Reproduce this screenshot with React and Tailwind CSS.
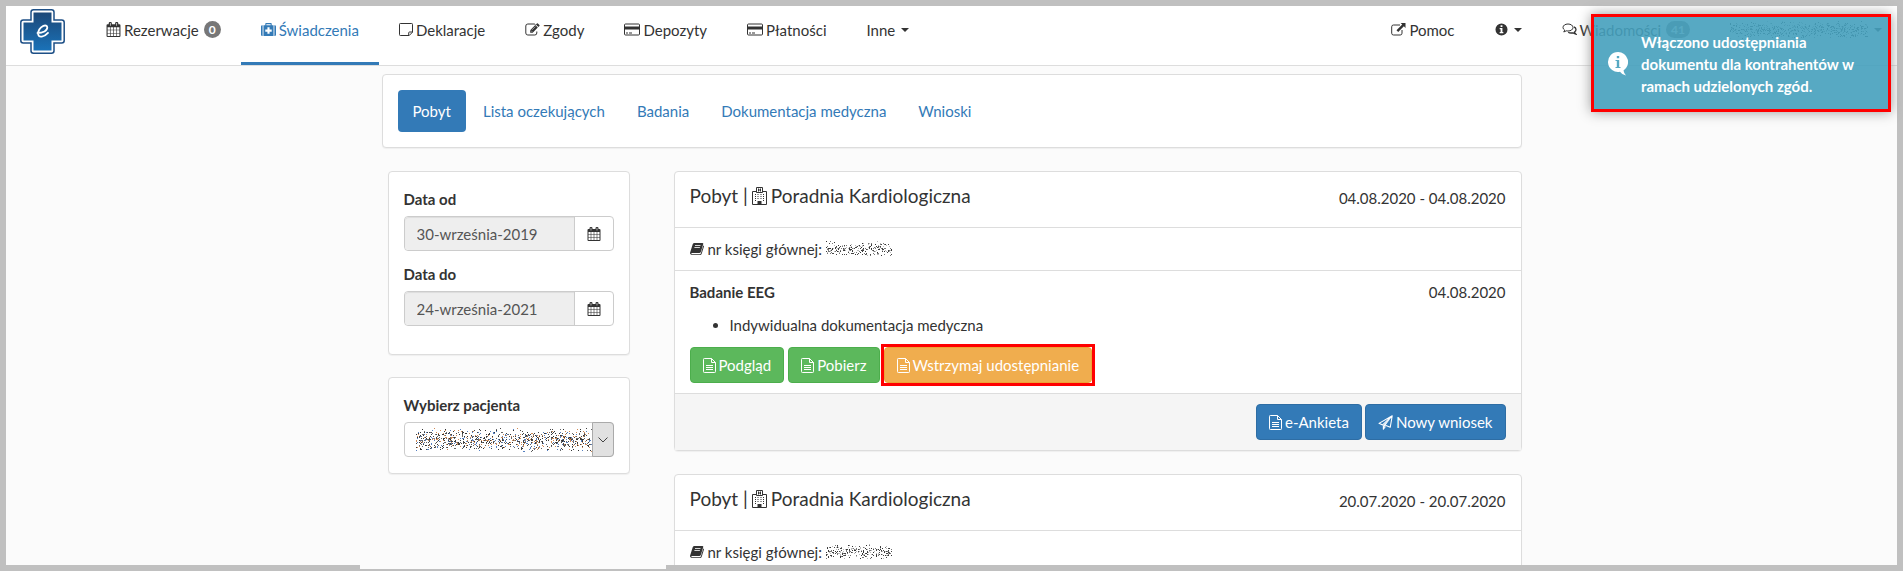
import { clsx } from 'clsx';

const CalendarIcon = ({ className }) => (
  <svg viewBox="0 0 14 14" className={className} fill="currentColor" aria-hidden="true">
    <path
      fillRule="evenodd"
      d="M1.5 2h1v-.7Q2.500 0 3.700 0h.6Q5.500 0 5.500 1.300V2h3v-.7Q8.500 0 9.700 0h.6q1.200 0 1.200 1.300V2h1q1 0 1 1v10q0 1-1 1h-11q-1 0-1-1V3q0-1 1-1zM1.500 5v2.200h2.200V5zM4.300 5v2.200h2.400V5zM7.300 5v2.200h2.400V5zM10.300 5v2.200h2.200V5zM1.500 7.800v2.400h2.200V7.800zM4.300 7.800v2.400h2.400V7.800zM7.300 7.800v2.400h2.400V7.800zM10.300 7.800v2.400h2.200V7.800zM1.500 10.800V13h2.200v-2.200zM4.300 10.800V13h2.400v-2.200zM7.300 10.800V13h2.400v-2.200zM10.300 10.800V13h2.200v-2.200zM3.700 1v2.500h.6V1zM9.700 1v2.500h.6V1z"
    />
  </svg>
);

const MedkitIcon = ({ className }) => (
  <svg viewBox="0 0 14 14" className={className} fill="currentColor" aria-hidden="true">
    <path
      fillRule="evenodd"
      d="M0 4.200Q0 3 1.200 3H1.500v10h-.3Q0 13 0 11.800zM2.300 3H4V1.700Q4 1 4.700 1h4.600q.7 0 .7.7V3h1.700v10H2.300zM5 2v1h4V2zM12.500 3h.3Q14 3 14 4.200v7.600q0 1.200-1.200 1.200h-.3zM6 5v2H4v2h2v2h2V9h2V7H8V5z"
    />
  </svg>
);

const NoteIcon = ({ className }) => (
  <svg viewBox="0 0 14 14" className={className} fill="none" stroke="currentColor" aria-hidden="true">
    <path d="M1.300 1h11.400q.8 0 .8.8v7.900l-3.300 3.300H1.300q-.8 0-.8-.8V1.800q0-.8.8-.8zM9.700 13v-2.700q0-.8.8-.8h3" />
  </svg>
);

const EditIcon = ({ className }) => (
  <svg viewBox="0 0 15 14" className={className} aria-hidden="true">
    <path
      d="M10.500 2.200Q10 1.500 9 1.500H2.800Q.8 1.500.8 3.500v7q0 2 2 2h7q2 0 2-2V9"
      fill="none"
      stroke="currentColor"
    />
    <path d="M5.200 10.200V7.700L10.300 2.600l2.500 2.500-5.100 5.100zM10.900 2l1-1q.5-.5 1 0l1.500 1.500q.5.5 0 1l-1 1z" fill="currentColor" />
    <path d="M6 8.100l1.300 1.300M7 7.400l3.400-3.400" stroke="#fff" strokeWidth=".5" />
  </svg>
);

const CardIcon = ({ className }) => (
  <svg viewBox="0 0 16 14" className={className} aria-hidden="true">
    <rect x=".5" y="1.500" width="15" height="11" rx="1" fill="none" stroke="currentColor" />
    <path d="M.5 4h15v3H.5zM2 10h2v1H2zM5 10h3v1H5z" fill="currentColor" />
  </svg>
);

const ExternalIcon = ({ className }) => (
  <svg viewBox="0 0 15 14" className={className} aria-hidden="true">
    <path d="M9 2.500H2.500q-1.800 0-1.800 1.800v6.400q0 1.800 1.800 1.800h6.700q1.800 0 1.800-1.800V7.500" fill="none" stroke="currentColor" />
    <path d="M9.600.5H14.500v4.900L12.900 3.800 7.200 9.500 5.500 7.800l5.700-5.700z" fill="currentColor" />
  </svg>
);

const InfoIcon = ({ className }) => (
  <svg viewBox="0 0 14 14" className={className} fill="currentColor" aria-hidden="true">
    <path fillRule="evenodd" d="M7 .5a6.500 6.500 0 1 1 0 13A6.500 6.500 0 0 1 7 .5zM6 2.500v1.800h2V2.500zM5 5.500v1.200h1v3.100H5V11h4V9.800H8V5.500z" />
  </svg>
);

const CommentsIcon = ({ className }) => (
  <svg viewBox="0 0 15 14" className={className} fill="none" stroke="currentColor" aria-hidden="true">
    <path d="M6 1.500c2.900 0 5 1.500 5 3.500s-2.100 3.500-5 3.500q-.9 0-1.800-.2-1 .8-2.500 1.100.8-.8 1-1.800Q1 6.600 1 5c0-2 2.100-3.500 5-3.500z" />
    <path d="M12 4.300c1.300.6 2 1.600 2 2.600q0 1.500-1.500 2.600.3 1.200 1.200 2-1.700-.3-2.800-1.200-2.900.6-4.700-.6" strokeWidth="1.300" />
  </svg>
);

const HospitalIcon = ({ className }) => (
  <svg viewBox="0 0 15 18" className={className} aria-hidden="true">
    <path d="M4.500 4.500h-4v13h14v-13h-4M4.500 5.500v-5h6v5zM6.500 1.500v3M8.500 1.500v3M6.500 3h2" fill="none" stroke="currentColor" />
    <path
      d="M3 7h1v1H3zM5.500 7h1v1h-1zM8.500 7h1v1h-1zM11 7h1v1h-1zM3 9h1v1H3zM5.500 9h1v1h-1zM8.500 9h1v1h-1zM11 9h1v1h-1zM3 11h1v1H3zM5.500 11h1v1h-1zM8.500 11h1v1h-1zM11 11h1v1h-1zM3 13h1v1H3zM11 13h1v1h-1zM5.500 14h4v3.500h-4z"
      fill="currentColor"
    />
  </svg>
);

const BookIcon = ({ className }) => (
  <svg viewBox="0 0 14 14" className={className} aria-hidden="true">
    <path d="M4.400 1h8q1.200 0 .8 1.300l-2.300 7.500Q10.500 11 9.300 11H2q-.9 0-.7.7.2.500 1 .5h7.400q.9 0 1.200-.9L13.300 3.500q.9.400.6 1.300l-2.200 7Q11.300 13 10 13H2.200Q.8 13 .2 11.700q-.3-.8 0-1.500L2.700 2.300Q3.200 1 4.400 1z" fill="currentColor" />
    <path d="M5 3.500h5.500M4.400 5.500h5.500" stroke="#fff" strokeWidth=".8" />
  </svg>
);

const FileIcon = ({ className }) => (
  <svg viewBox="0 0 13 15" className={className} fill="none" stroke="currentColor" aria-hidden="true">
    <path d="M1.300.5H8.500L12.500 4.500v9.200q0 .8-.8.8H1.300q-.8 0-.8-.8V1.300q0-.8.8-.8zM8.500.5v4h4M3 7.500h7M3 9.500h7M3 11.500h7" />
  </svg>
);

const PlaneIcon = ({ className }) => (
  <svg viewBox="0 0 14 14" className={className} aria-hidden="true">
    <path d="M13.300.7L.9 7.800l3.400 1.500L13.300.7l-1.900 10.800-4.600-1.900M5 9.800v3.500l2-2.600" fill="none" stroke="currentColor" strokeLinejoin="round" />
    <path d="M5 9.500L13 1.500 6.500 10.200 5 13.500z" fill="currentColor" />
  </svg>
);

const Caret = () => <span className="ml-[3px] inline-block border-x-4 border-t-4 border-x-transparent border-t-current" />;

const Logo = () => (
  <svg viewBox="0 0 45 45" className="size-[45px]" role="img" aria-label="e">
    <defs>
      <linearGradient id="logoFill" x1="0" y1="0" x2="0" y2="1">
        <stop offset="0" stopColor="#1c4878" />
        <stop offset="1" stopColor="#1a72b8" />
      </linearGradient>
    </defs>
    <path
      d="M13.500.8h18q2.500 0 2.500 2.500V11h7.700q2.500 0 2.500 2.500v18q0 2.500-2.500 2.500H34v7.700q0 2.500-2.500 2.500H13.500q-2.500 0-2.500-2.500V34H3.300Q.8 34 .8 31.500v-18Q.8 11 3.300 11H11V3.300Q11 .8 13.500.8z"
      fill="#fff"
      stroke="#1d4f86"
      strokeWidth="1.500"
    />
    <path d="M13.500 3.500h18v10h10v18h-10v10h-18v-10h-10v-18h10z" fill="url(#logoFill)" />
    <path
      d="M17.500 24c5.500 0 9.800-2.400 9.800-5.400 0-2-2-2.500-3.900-1.700-3.500 1.500-5.800 5.500-5.200 8.500.7 3.600 5.600 2.900 9.800-1.600"
      fill="none"
      stroke="#fff"
      strokeWidth="1.800"
      strokeLinecap="round"
    />
  </svg>
);

// Speckled smear that hides private data
const INKS = ['#333', '#777', '#444', '#bbb'];
const COLOR_INKS = ['#333', '#557fc0', '#666', '#d08a55', '#444'];

const Redacted = ({ width, height, seed, colors = INKS, className }) => {
  const paths = colors.map(() => '');
  let s = seed;
  const next = () => {
    s = (s * 16807) % 2147483647;
    return s / 2147483647;
  };
  for (let i = 0; i < (width * height) / 4; i += 1) {
    const x = Math.floor(next() * width);
    const y = Math.floor(((next() + next()) / 2) * height);
    paths[i % colors.length] += `M${x} ${y}h1v1h-1z`;
  }
  return (
    <svg width={width} height={height} viewBox={`0 0 ${width} ${height}`} className={clsx('inline-block shrink-0', className)} aria-hidden="true">
      {paths.map((d, i) => (
        <path key={colors[i]} d={d} fill={colors[i]} shapeRendering="crispEdges" />
      ))}
    </svg>
  );
};

const Badge = ({ children }) => (
  <span className="ml-[2px] rounded-full bg-[#777] px-[5px] text-[12px] leading-[17px] font-bold text-white">{children}</span>
);

const NavItem = ({ icon: Icon, iconClass = 'w-[15px]', active, caret, children }) => (
  <a
    href="#"
    className={clsx(
      'flex h-[59px] items-center gap-[3px] border-b-[3px] px-5 pb-[9px] whitespace-nowrap',
      active ? 'border-[#337ab7] text-[#337ab7]' : 'border-transparent',
    )}
  >
    {Icon && <Icon className={clsx('h-[15px]', iconClass)} />}
    {children}
    {caret && <Caret />}
  </a>
);

const tabs = ['Pobyt', 'Lista oczekujących', 'Badania', 'Dokumentacja medyczna', 'Wnioski'];

const Panel = ({ className, children }) => (
  <section className={clsx('rounded border border-[#ddd] bg-white shadow-[0_1px_1px_rgba(0,0,0,0.05)]', className)}>{children}</section>
);

const variants = {
  success: 'border-[#4cae4c] bg-[#5cb85c]',
  warning: 'border-[#eea236] bg-[#f0ad4e]',
  primary: 'border-[#2e6da4] bg-[#337ab7]',
};

const Button = ({ icon: Icon, iconClass = 'w-[13px]', variant, children }) => (
  <button type="button" className={clsx('flex h-9 items-center gap-[3px] rounded border px-3 text-white', variants[variant])}>
    <Icon className={clsx('h-[15px]', iconClass)} />
    {children}
  </button>
);

const DateField = ({ id, label, value }) => (
  <div className="mb-3">
    <label htmlFor={id} className="mb-[6px] block font-bold">{label}</label>
    <div className="flex h-[35px] rounded border border-[#ccc]">
      <input id={id} readOnly value={value} className="w-full min-w-0 rounded-l bg-[#eee] px-3 text-[#555] shadow-[inset_0_1px_1px_rgba(0,0,0,0.075)] outline-none" />
      <button type="button" aria-label={label} className="flex shrink-0 items-center border-l border-[#ccc] px-3">
        <CalendarIcon className="size-[14px]" />
      </button>
    </div>
  </div>
);

const StayHeader = ({ dates, seed }) => (
  <>
    <header className="flex h-[55px] items-center justify-between px-[15px] pb-1">
      <h2 className="flex items-center gap-1 pb-1 text-[19px]">
        Pobyt | <HospitalIcon className="h-[18px] w-[15px]" /> Poradnia Kardiologiczna
      </h2>
      <span>{dates}</span>
    </header>
    <div className="flex h-[43px] items-center gap-1 border-t border-[#ddd] px-[15px]">
      <BookIcon className="size-[14px]" />
      nr księgi głównej:
      <Redacted width={66} height={16} seed={seed} />
    </div>
  </>
);

export default function App() {
  return (
    <div className="relative flex h-screen flex-col border-6 border-[#c0c0c0] bg-[#fbfbfb] font-['Lato',sans-serif] text-[15px] leading-[22px] text-[#333]">
      <div className="min-h-0 grow overflow-hidden">
        <nav className="flex h-[60px] justify-between border-b border-[#ddd] bg-white">
          <div className="flex">
            <a href="#" className="mr-[21px] ml-[14px] pt-[3px]"><Logo /></a>
            <NavItem icon={CalendarIcon}>Rezerwacje <Badge>0</Badge></NavItem>
            <NavItem icon={MedkitIcon} active>Świadczenia</NavItem>
            <NavItem icon={NoteIcon} iconClass="w-[14px]">Deklaracje</NavItem>
            <NavItem icon={EditIcon}>Zgody</NavItem>
            <NavItem icon={CardIcon} iconClass="w-4">Depozyty</NavItem>
            <NavItem icon={CardIcon} iconClass="w-4">Płatności</NavItem>
            <NavItem caret>Inne</NavItem>
          </div>
          <div className="-mr-[5px] flex">
            <NavItem icon={ExternalIcon}>Pomoc</NavItem>
            <NavItem icon={InfoIcon} iconClass="w-[13px]" caret />
            <NavItem icon={CommentsIcon}>Wiadomości <Badge>41</Badge></NavItem>
            <NavItem caret><Redacted width={138} height={18} seed={77} /></NavItem>
          </div>
        </nav>

        <main className="mx-auto mt-2 max-w-[1140px]">
          <Panel className="p-[15px]">
            <ul className="flex gap-[2px]">
              {tabs.map((tab, i) => (
                <li key={tab}>
                  <a href="#" className={clsx('block rounded px-[15px] py-[10px]', i === 0 ? 'bg-[#337ab7] text-white' : 'text-[#337ab7]')}>{tab}</a>
                </li>
              ))}
            </ul>
          </Panel>

          <div className="mt-[23px] flex items-start justify-between">
            <aside className="ml-[6px] flex w-[242px] flex-col gap-[22px]">
              <Panel className="px-[15px] py-4">
                <DateField id="date-from" label="Data od" value="30-września-2019" />
                <DateField id="date-to" label="Data do" value="24-września-2021" />
              </Panel>
              <Panel className="px-[15px] py-4">
                <label htmlFor="patient" className="mb-[6px] block font-bold">Wybierz pacjenta</label>
                <div className="relative h-[35px]">
                  <select id="patient" className="h-full w-full appearance-none rounded border border-[#ccc] bg-white" />
                  <div className="pointer-events-none absolute inset-0 flex items-center justify-between pl-3">
                    <Redacted width={176} height={24} seed={31} colors={COLOR_INKS} />
                    <span className="flex h-full w-[22px] items-center justify-center rounded-r border border-[#aaa] bg-[#e1e1e1]">
                      <svg viewBox="0 0 10 6" className="w-[10px]" fill="none" stroke="#444"><path d="M.5.500L5 5l4.500-4.500" /></svg>
                    </span>
                  </div>
                </div>
              </Panel>
            </aside>

            <div className="flex w-[848px] flex-col gap-[23px]">
              <Panel>
                <StayHeader dates="04.08.2020 - 04.08.2020" seed={11} />
                <div className="border-t border-[#ddd] px-[15px] py-[10px]">
                  <div className="flex justify-between">
                    <h3 className="font-bold">Badanie EEG</h3>
                    <span>04.08.2020</span>
                  </div>
                  <ul className="my-[11px] list-disc pl-10">
                    <li>Indywidualna dokumentacja medyczna</li>
                  </ul>
                  <div className="flex gap-1">
                    <Button icon={FileIcon} variant="success">Podgląd</Button>
                    <Button icon={FileIcon} variant="success">Pobierz</Button>
                    <div className="outline-3 outline-[#f00]">
                      <Button icon={FileIcon} variant="warning">Wstrzymaj udostępnianie</Button>
                    </div>
                  </div>
                </div>
                <footer className="flex justify-end gap-[3px] border-t border-[#ddd] bg-[#f5f5f5] px-[15px] py-[10px]">
                  <Button icon={FileIcon} variant="primary">e-Ankieta</Button>
                  <Button icon={PlaneIcon} iconClass="w-[15px]" variant="primary">Nowy wniosek</Button>
                </footer>
              </Panel>
              <Panel>
                <StayHeader dates="20.07.2020 - 20.07.2020" seed={53} />
              </Panel>
            </div>
          </div>
        </main>
      </div>

      {/* status strip overlapping the bottom frame */}
      <div className="absolute -bottom-1 left-[354px] h-1 w-[306px] bg-[#fbfbfb]" />

      <div role="status" className="absolute top-2 right-[6px] flex h-[98px] w-[300px] items-center border-3 border-[#f00] bg-[#45a0bd]/90 pt-[2px] pl-[14px] font-bold text-white shadow-[0_0_12px_#999]">
        <svg viewBox="0 0 20 24" className="mr-[13px] h-6 w-5 shrink-0" fill="currentColor" aria-hidden="true">
          <path fillRule="evenodd" d="M10 0a10 10 0 0 1 5.500 18.400q.5 3 2.500 5.100-4-.5-6-3.700A10 10 0 1 1 10 0zM8.800 4v2.200h2.400V4zM7.500 8v1h1.300v6H7.500v1h5v-1h-1.300V8z" />
        </svg>
        <p className="w-[215px]">Włączono udostępniania dokumentu dla kontrahentów w ramach udzielonych zgód.</p>
      </div>
    </div>
  );
}
